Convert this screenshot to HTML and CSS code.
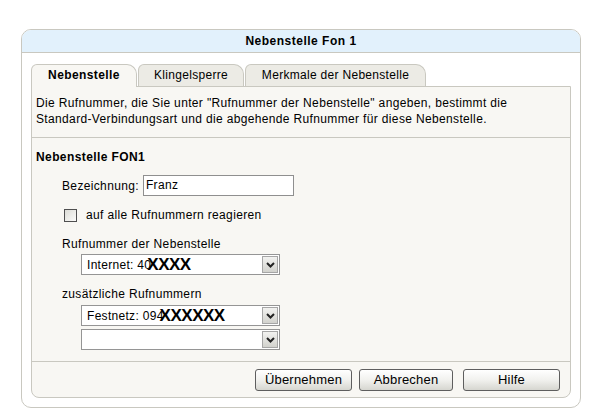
FILE: index.html
```html
<!DOCTYPE html>
<html lang="de">
<head>
<meta charset="utf-8">
<title>Nebenstelle Fon 1</title>
<link rel="stylesheet" href="styles.css">
</head>
<body>
<div class="box">
  <div class="box-head">Nebenstelle Fon 1</div>
  <div class="box-body">
    <div class="tabs">
      <div class="tab active t1">Nebenstelle</div>
      <div class="tab t2">Klingelsperre</div>
      <div class="tab t3">Merkmale der Nebenstelle</div>
    </div>
    <div class="panel">
      <div class="intro">Die Rufnummer, die Sie unter "Rufnummer der Nebenstelle" angeben, bestimmt die Standard-Verbindungsart und die abgehende Rufnummer für diese Nebenstelle.</div>
      <div class="section">
        <div class="sec-title">Nebenstelle FON1</div>
        <div class="row-name">
          <span class="lbl">Bezeichnung:</span>
          <span class="input">Franz</span>
        </div>
        <div class="row-check">
          <span class="check"></span>
          <span>auf alle Rufnummern reagieren</span>
        </div>
        <div class="field-lbl">Rufnummer der Nebenstelle</div>
        <div class="select first">
          <span class="sel-text">Internet: 40<span class="mask">XXXX</span></span>
          <span class="arrow"><svg width="9" height="6" viewBox="0 0 9 6"><path d="M1 1 L4.5 4.5 L8 1" fill="none" stroke="#222" stroke-width="2"/></svg></span>
        </div>
        <div class="field-lbl lbl2">zusätzliche Rufnummern</div>
        <div class="select">
          <span class="sel-text">Festnetz: 094<span class="mask m2">XXXXXX</span></span>
          <span class="arrow"><svg width="9" height="6" viewBox="0 0 9 6"><path d="M1 1 L4.5 4.5 L8 1" fill="none" stroke="#222" stroke-width="2"/></svg></span>
        </div>
        <div class="select second">
          <span class="sel-text"></span>
          <span class="arrow"><svg width="9" height="6" viewBox="0 0 9 6"><path d="M1 1 L4.5 4.5 L8 1" fill="none" stroke="#222" stroke-width="2"/></svg></span>
        </div>
      </div>
      <div class="buttons">
        <span class="btn b1">Übernehmen</span>
        <span class="btn b2">Abbrechen</span>
        <span class="btn b3">Hilfe</span>
      </div>
    </div>
  </div>
</div>
</body>
</html>
```
FILE: styles.css
```css
html, body {
  margin: 0;
  padding: 0;
  background: #ffffff;
}
body {
  padding: 29px 0 0 21px;
  font-family: "Liberation Sans", Arial, sans-serif;
  font-size: 12px;
  letter-spacing: 0.35px;
  color: #000;
}
.box {
  width: 558px;
  border: 1px solid #c9c8c0;
  border-radius: 10px;
  background: #fff;
}
.box-head {
  height: 22px;
  line-height: 22px;
  background: #e2f1fc;
  border-bottom: 1px solid #c9c8c0;
  border-radius: 9px 9px 0 0;
  text-align: center;
  font-weight: bold;
  letter-spacing: 0.5px;
}
.box-body {
  padding: 11px 9px 9px 9px;
}
.tabs {
  display: flex;
  align-items: flex-end;
  height: 22px;
  position: relative;
  z-index: 1;
}
.tab {
  box-sizing: border-box;
  height: 22px;
  line-height: 21px;
  border: 1px solid #c9c8c0;
  border-bottom: none;
  border-radius: 6px 10px 0 0;
  background: #ecebe5;
  text-align: center;
  letter-spacing: 0.3px;
}
.tab.active {
  background: #f8f7f3;
  font-weight: bold;
  height: 23px;
  margin-bottom: -1px;
  letter-spacing: 0.4px;
}
.t1 { width: 106px; }
.t2 { width: 106px; margin-left: 1px; }
.t3 { width: 181px; margin-left: 1px; }
.panel {
  border: 1px solid #c9c8c0;
  border-radius: 0 0 8px 8px;
  background: #f8f7f3;
}
.intro {
  padding: 8px 40px 10px 4px;
  line-height: 16px;
  border-bottom: 1px solid #c9c8c0;
}
.section {
  padding: 11px 4px 11px 4px;
  border-bottom: 1px solid #c9c8c0;
}
.sec-title {
  font-weight: bold;
  line-height: 16px;
  letter-spacing: 0.4px;
}
.row-name {
  display: flex;
  align-items: center;
  margin-top: 10px;
  padding-left: 26px;
  height: 21px;
}
.lbl {
  margin-right: 4px;
}
.input {
  box-sizing: border-box;
  width: 151px;
  height: 21px;
  border: 1px solid #8f8f8f;
  background: #fff;
  line-height: 19px;
  padding-left: 2px;
}
.row-check {
  display: flex;
  align-items: center;
  margin-top: 12px;
  padding-left: 28px;
  height: 14px;
}
.check {
  box-sizing: border-box;
  width: 13px;
  height: 13px;
  border: 1px solid #4f4f4f;
  background: linear-gradient(135deg, #dcdcd6, #fbfbf9);
  margin-right: 9px;
}
.field-lbl {
  margin-top: 14px;
  padding-left: 26px;
  line-height: 16px;
}
.lbl2 {
  margin-top: 11px;
}
.select {
  box-sizing: border-box;
  display: flex;
  align-items: center;
  margin-left: 45px;
  margin-top: 3px;
  width: 199px;
  height: 21px;
  border: 1px solid #959595;
  background: #fff;
}
.select.first {
  margin-top: 2px;
}
.select.second {
  margin-top: 3px;
}
.sel-text {
  flex: 1;
  padding-left: 5px;
  white-space: nowrap;
  overflow: hidden;
  line-height: 19px;
  letter-spacing: 0.3px;
}
.mask {
  font-size: 17px;
  font-weight: bold;
  letter-spacing: -0.5px;
  margin-left: -4px;
  vertical-align: -1px;
}
.arrow {
  box-sizing: border-box;
  width: 16px;
  height: 17px;
  margin-right: 1px;
  border: 1px solid #a6a6a6;
  background: linear-gradient(#f2f2f0, #d2d2cd);
  display: flex;
  align-items: center;
  justify-content: center;
}
.buttons {
  display: flex;
  justify-content: flex-end;
  padding: 7px 10px 6px 0;
}
.btn {
  box-sizing: border-box;
  height: 22px;
  line-height: 20px;
  border: 1px solid #5e5e5e;
  border-radius: 3px;
  background: linear-gradient(#ffffff 0%, #f1f1ee 50%, #d6d6d0 100%);
  text-align: center;
  font-size: 13px;
  letter-spacing: 0.2px;
}
.b1 { width: 97px; }
.b2 { width: 94px; margin-left: 7px; }
.b3 { width: 97px; margin-left: 10px; }
```
